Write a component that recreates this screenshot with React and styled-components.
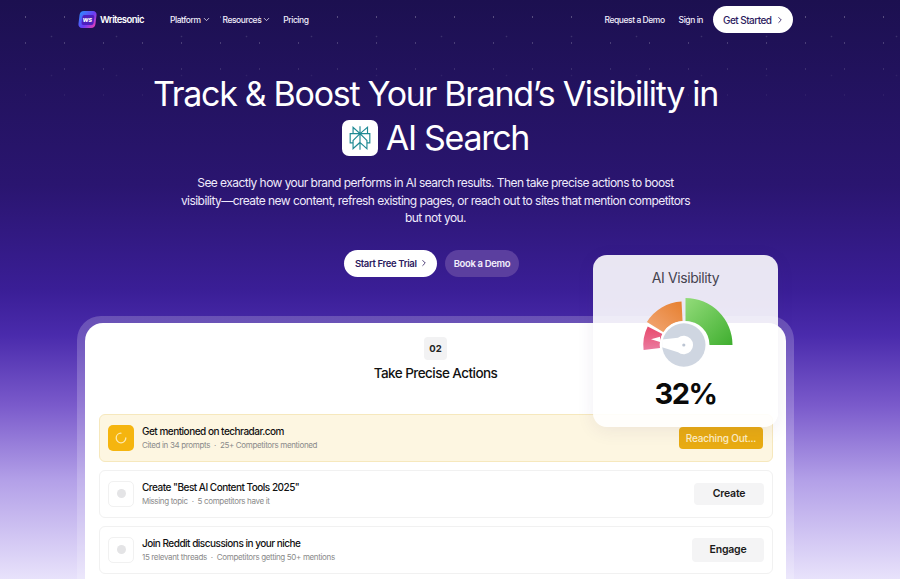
import React from 'react';
import styled, { createGlobalStyle } from 'styled-components';
import { ChevronDown, ChevronRight } from 'lucide-react';

const GlobalStyle = createGlobalStyle`
  html, body {
    margin: 0;
    padding: 0;
    background: #1a0f52;
    font-family: 'Inter', 'Liberation Sans', sans-serif;
  }
`;

const Page = styled.div`
  position: relative;
  width: 900px;
  height: 579px;
  overflow: hidden;
  box-sizing: border-box;
  padding-left: 77px;
  background: linear-gradient(180deg, #1c1050 0%, #2a1570 32%, #3a1e96 50%, #4a2bac 58%, #7a5acb 70%, #b3a0e8 83%, #e8e2fb 100%);

  &::before {
    content: '';
    position: absolute;
    left: 0;
    right: 0;
    top: 0;
    height: 115px;
    background-image:
      radial-gradient(circle, rgba(255, 255, 255, 0.3) 0.7px, transparent 1.1px),
      radial-gradient(circle, rgba(255, 255, 255, 0.2) 0.7px, transparent 1.1px);
    background-size: 39px 26px, 65px 39px;
    background-position: 6px 4px, 19px 17px;
    mask-image: linear-gradient(180deg, #000 0%, transparent 100%);
  }
`;

const Column = styled.div`
  position: relative;
  width: 717px;
`;

const Nav = styled.nav`
  height: 39px;
  padding: 0 1px 0 2px;
  display: flex;
  align-items: center;
  justify-content: space-between;
`;

const NavGroup = styled.div`
  display: flex;
  align-items: center;
  gap: ${(props) => props.gap || 0}px;
`;

const Brand = styled.div`
  display: flex;
  align-items: center;
  gap: 4px;
  margin-right: 26px;
  font-size: 9.5px;
  font-weight: 600;
  letter-spacing: -0.55px;
  color: #fff;
`;

const BrandMark = styled.div`
  width: 17px;
  height: 17px;
  border-radius: 4px;
  background: linear-gradient(125deg, #2b8fff 0%, #6a3cf5 55%, #f23fb0 100%);
  transform: skewX(-7deg);
  display: flex;
  align-items: center;
  justify-content: center;
`;

const BrandText = styled.span`
  width: 12px;
  height: 10px;
  border-radius: 2px;
  background: #4d1fbe;
  color: #fff;
  font-size: 5.5px;
  font-weight: 800;
  line-height: 10px;
  letter-spacing: 0;
  text-align: center;
`;

const NavLink = styled.a`
  display: flex;
  align-items: center;
  gap: 1px;
  font-size: 8.5px;
  font-weight: 500;
  letter-spacing: -0.45px;
  color: #f1eefb;
`;

const NavCta = styled.a`
  width: 80px;
  height: 27px;
  box-sizing: border-box;
  padding-left: 10px;
  margin-left: -4px;
  border-radius: 14px;
  background: #fff;
  color: #2c1a5e;
  font-size: 10px;
  font-weight: 500;
  letter-spacing: -0.55px;
  display: flex;
  align-items: center;
  gap: 4px;
`;

const Hero = styled.section`
  display: flex;
  flex-direction: column;
  align-items: center;
  padding-top: 33px;
`;

const Title = styled.h1`
  margin: 0;
  font-size: 34px;
  line-height: 44px;
  font-weight: 400;
  letter-spacing: -1.3px;
  color: #fff;
  text-align: center;
`;

const TitleLine = styled.span`
  display: flex;
  align-items: center;
  justify-content: center;
  gap: 8px;
`;

const LogoTile = styled.span`
  width: 36px;
  height: 36px;
  border-radius: 7px;
  background: #fff;
  display: flex;
  align-items: center;
  justify-content: center;
`;

const Lead = styled.p`
  width: 515px;
  margin: 14px 0 0;
  font-size: 12px;
  line-height: 17.5px;
  letter-spacing: -0.55px;
  color: #efeafb;
  text-align: center;
`;

const Actions = styled.div`
  display: flex;
  gap: 8px;
  margin: 23px 8px 0 0;
`;

const HeroButton = styled.a`
  height: 27px;
  box-sizing: border-box;
  padding: ${(props) => (props.$primary ? '0 8px 0 11px' : '0 9px')};
  border-radius: 14px;
  display: flex;
  align-items: center;
  gap: 2px;
  font-size: 9.5px;
  font-weight: 600;
  letter-spacing: -0.35px;
  background: ${(props) => (props.$primary ? '#fff' : '#5b3f9f')};
  color: ${(props) => (props.$primary ? '#2c1a5e' : '#f3effc')};
`;

const Frame = styled.section`
  margin-top: 39px;
  padding: 7px 8px 0;
  border-radius: 24px 24px 0 0;
  background: rgba(255, 255, 255, 0.2);
`;

const Card = styled.div`
  height: 300px;
  box-sizing: border-box;
  padding: 14px 14px 0;
  border-radius: 18px 18px 0 0;
  background: #fff;
  display: flex;
  flex-direction: column;
`;

const Step = styled.div`
  align-self: center;
  width: 23px;
  height: 23px;
  border-radius: 4px;
  background: #f2f2f3;
  font-size: 9.5px;
  font-weight: 700;
  color: #222;
  display: flex;
  align-items: center;
  justify-content: center;
`;

const CardTitle = styled.h2`
  margin: 6px 0 0;
  font-size: 13.5px;
  line-height: 14px;
  font-weight: 500;
  letter-spacing: -0.55px;
  color: #111;
  text-align: center;
`;

const List = styled.div`
  margin: 34px -1px 0 0;
  display: flex;
  flex-direction: column;
  gap: 7.5px;
`;

const Row = styled.div`
  height: 48.5px;
  box-sizing: border-box;
  padding: 0 ${(props) => (props.$active ? 9 : 8)}px 0 8px;
  border-radius: 6px;
  border: 1px solid ${(props) => (props.$active ? '#f6e8bd' : '#f1f1f1')};
  background: ${(props) => (props.$active ? '#fdf6e1' : '#fff')};
  display: flex;
  align-items: center;
  gap: 8px;
`;

const RowIcon = styled.div`
  width: 26px;
  height: 26px;
  flex: none;
  box-sizing: border-box;
  border-radius: 5px;
  border: ${(props) => (props.$active ? 'none' : '1px solid #f1f1f1')};
  background: ${(props) => (props.$active ? '#f5b50f' : '#fff')};
  display: flex;
  align-items: center;
  justify-content: center;
`;

const Dot = styled.span`
  width: 9px;
  height: 9px;
  border-radius: 50%;
  background: #e4e4e6;
`;

const RowBody = styled.div`
  flex: 1;
`;

const RowTitle = styled.div`
  font-size: 10px;
  line-height: 14px;
  font-weight: 500;
  letter-spacing: -0.5px;
  color: #111;
`;

const RowMeta = styled.div`
  margin-top: 1px;
  font-size: 8px;
  line-height: 13px;
  letter-spacing: -0.35px;
  color: #8a8a8a;
  display: flex;
  gap: 4px;
`;

const RowButton = styled.div`
  height: ${(props) => props.$h}px;
  width: ${(props) => props.$w}px;
  border-radius: 4px;
  background: ${(props) => (props.$active ? '#e8ab12' : '#f4f4f5')};
  color: ${(props) => (props.$active ? '#fdeec6' : '#1a1a1a')};
  font-size: ${(props) => (props.$active ? 10 : 10.5)}px;
  font-weight: ${(props) => (props.$active ? 500 : 600)};
  letter-spacing: -0.2px;
  display: flex;
  align-items: center;
  justify-content: center;
`;

const VisibilityCard = styled.aside`
  position: absolute;
  left: 516px;
  top: 255px;
  width: 185px;
  height: 172px;
  border-radius: 14px;
  background: rgba(255, 255, 255, 0.89);
  box-shadow: 0 4px 18px rgba(60, 40, 120, 0.08);
  display: flex;
  flex-direction: column;
  align-items: center;
`;

const VisibilityTitle = styled.div`
  margin-top: 14px;
  font-size: 14px;
  line-height: 17px;
  letter-spacing: -0.4px;
  color: #45434f;
`;

const GaugeSvg = styled.svg`
  display: block;
  margin-top: 9px;
`;

const Percent = styled.div`
  margin-top: 7px;
  font-size: 29px;
  line-height: 34px;
  font-weight: 700;
  letter-spacing: -1.5px;
  color: #0a0a0a;
`;

// annular sector around the gauge centre, angles in degrees from the right, counter-clockwise
const sector = (cx, cy, r1, r2, a1, a2) => {
  const pt = (r, a) => [cx + r * Math.cos((a * Math.PI) / 180), cy - r * Math.sin((a * Math.PI) / 180)];
  const [x1, y1] = pt(r2, a1);
  const [x2, y2] = pt(r2, a2);
  const [x3, y3] = pt(r1, a2);
  const [x4, y4] = pt(r1, a1);
  return `M${x1} ${y1}A${r2} ${r2} 0 0 0 ${x2} ${y2}L${x3} ${y3}A${r1} ${r1} 0 0 1 ${x4} ${y4}Z`;
};

const Gauge = () => (
  <GaugeSvg width="96" height="75" viewBox="0 0 96 75">
    <defs>
      <linearGradient id="gGreen" x1="0" y1="0" x2="1" y2="1">
        <stop offset="0" stopColor="#93dc7a" />
        <stop offset="1" stopColor="#3fae2f" />
      </linearGradient>
      <linearGradient id="gOrange" x1="0" y1="1" x2="1" y2="0">
        <stop offset="0" stopColor="#f2a878" />
        <stop offset="1" stopColor="#e67f2e" />
      </linearGradient>
      <linearGradient id="gRed" x1="0" y1="0" x2="0" y2="1">
        <stop offset="0" stopColor="#e84a6c" />
        <stop offset="1" stopColor="#ea7ba0" />
      </linearGradient>
    </defs>
    <path d={sector(47.5, 50, 24, 47, 0, 90)} fill="url(#gGreen)" />
    <path d={sector(45.8, 50, 24, 43.5, 93, 148)} fill="url(#gOrange)" />
    <path d={sector(45.8, 50, 24, 40.5, 153, 187)} fill="url(#gRed)" />
    <circle cx="45.8" cy="50" r="24" fill="#fff" />
    <circle cx="45.8" cy="50" r="21.7" fill="#cfd6e1" />
    <path d="M24.1 44.5L40 42.7A9.3 9.3 0 1 1 40 57.3L24.1 52.2Z" fill="#fff" />
    <path d="M13 44.2L22 41.8V47Z" fill="#fff" />
    <circle cx="45.8" cy="50" r="1.6" fill="#bcc5d3" />
  </GaugeSvg>
);

const PerplexityIcon = () => (
  <svg width="24" height="24" viewBox="0 0 24 24" fill="#1f8a94">
    <path d="M22.3977 7.0896h-2.3106V.0676l-7.5094 6.3542V.1577h-1.1554v6.1966L4.4904 0v7.0896H1.6023v10.3976h2.8882V24l6.932-6.1477v6.0074h1.1554v-6.1966l6.9318 6.2291v-6.4098h2.8882V7.0896zm-3.4657-4.531v4.531h-5.355l5.355-4.531zm-13.2862.0676 4.8691 4.4634H5.6458V2.6262zM2.7576 16.332V8.245h7.8476l-6.1149 6.1147v1.9723H2.7576zm2.8882 5.0404v-3.8852h.0001v-2.6488l5.7763-5.7764v7.0111l-5.7764 5.2993zm12.7086.0248-5.7766-5.1509V9.0618l5.7766 5.7766v6.5588zm2.8882-5.0652h-1.733v-1.9723L13.3948 8.245h7.8478v8.087z" />
  </svg>
);

const rows = [
  { title: 'Get mentioned on techradar.com', meta: ['Cited in 34 prompts', '25+ Competitors mentioned'], action: 'Reaching Out...', w: 84, h: 22, active: true },
  { title: 'Create "Best AI Content Tools 2025"', meta: ['Missing topic', '5 competitors have it'], action: 'Create', w: 70, h: 22 },
  { title: 'Join Reddit discussions in your niche', meta: ['15 relevant threads', 'Competitors getting 50+ mentions'], action: 'Engage', w: 72, h: 24 },
];

const App = () => {
  return (
    <Page>
      <GlobalStyle />
      <Column>
        <Nav>
          <NavGroup>
            <Brand>
              <BrandMark><BrandText>WS</BrandText></BrandMark>
              Writesonic
            </Brand>
            <NavGroup gap={12}>
              <NavLink>Platform <ChevronDown size={9} /></NavLink>
              <NavLink>Resources <ChevronDown size={9} /></NavLink>
              <NavLink>Pricing</NavLink>
            </NavGroup>
          </NavGroup>
          <NavGroup gap={14}>
            <NavLink>Request a Demo</NavLink>
            <NavLink>Sign in</NavLink>
            <NavCta>Get Started <ChevronRight size={10} /></NavCta>
          </NavGroup>
        </Nav>
        <Hero>
          <Title>
            Track &amp; Boost Your Brand’s Visibility in
            <TitleLine>
              <LogoTile><PerplexityIcon /></LogoTile>
              AI Search
            </TitleLine>
          </Title>
          <Lead>
            See exactly how your brand performs in AI search results. Then take precise actions to boost
            visibility—create new content, refresh existing pages, or reach out to sites that mention competitors
            but not you.
          </Lead>
          <Actions>
            <HeroButton $primary>Start Free Trial <ChevronRight size={10} /></HeroButton>
            <HeroButton>Book a Demo</HeroButton>
          </Actions>
        </Hero>
        <Frame>
          <Card>
            <Step>02</Step>
            <CardTitle>Take Precise Actions</CardTitle>
            <List>
              {rows.map((row) => (
                <Row key={row.title} $active={row.active}>
                  <RowIcon $active={row.active}>
                    {row.active ? (
                      <svg width="12" height="12" viewBox="0 0 12 12" fill="none">
                        <circle cx="6" cy="6" r="4.8" stroke="#fde9b0" strokeWidth="1.3" strokeDasharray="22 8" strokeLinecap="round" />
                      </svg>
                    ) : (
                      <Dot />
                    )}
                  </RowIcon>
                  <RowBody>
                    <RowTitle>{row.title}</RowTitle>
                    <RowMeta>
                      <span>{row.meta[0]}</span>
                      <span>·</span>
                      <span>{row.meta[1]}</span>
                    </RowMeta>
                  </RowBody>
                  <RowButton $active={row.active} $w={row.w} $h={row.h}>{row.action}</RowButton>
                </Row>
              ))}
            </List>
          </Card>
        </Frame>
        <VisibilityCard>
          <VisibilityTitle>AI Visibility</VisibilityTitle>
          <Gauge />
          <Percent>32%</Percent>
        </VisibilityCard>
      </Column>
    </Page>
  );
};

export default App;
